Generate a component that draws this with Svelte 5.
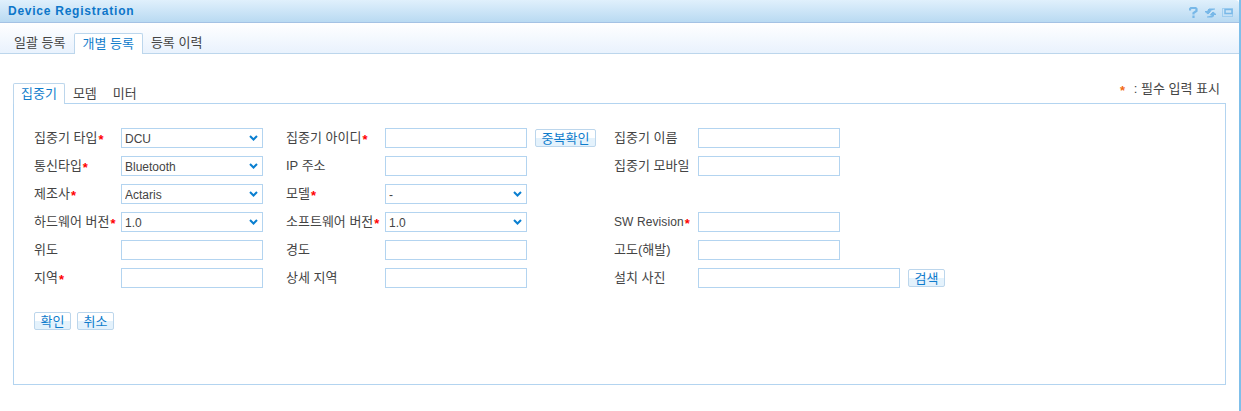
<script lang="ts">
  const topTabs = ['일괄 등록', '개별 등록', '등록 이력']
  const subTabs = ['집중기', '모뎀', '미터']
</script>

{#snippet sel(value: string)}
  <span class="select">
    <select><option>{value}</option></select>
    <svg class="chev" width="9" height="6" viewBox="0 0 9 6"><path d="M1 1l3.500 3.500L8 1" fill="none" stroke="#0a7fd0" stroke-width="2"/></svg>
  </span>
{/snippet}

{#snippet label(text: string, req = false)}
  <span class="label">{text}{#if req}<i class="req">*</i>{/if}</span>
{/snippet}

<div class="page">
  <header class="title">
    <h1>Device Registration</h1>
    <div class="icons">
      <svg class="help" width="9" height="11" viewBox="0 0 9 11"><path d="M1 3.500V2l1-1h4.500l1 1v2L4.500 6v1.500M4.500 8.500V11" fill="none" stroke="#78b8e8" stroke-width="2.200"/></svg>
      <svg width="11" height="10" viewBox="0 0 11 10"><path d="M10 1H4L3 2v2M0 3.500h5.500L3 6zM2 9h5.500L8.500 8V6.500M11 6.500H5.500L8 4z" fill="#78b8e8" stroke="#78b8e8"/></svg>
      <svg width="11" height="9" viewBox="0 0 11 9"><path d="M.5 .5h10v8H.5z" fill="none" stroke="#78b8e8" stroke-dasharray="1 1"/><path d="M3 1.500h7v4H3z" fill="none" stroke="#78b8e8" stroke-width="1.500"/></svg>
    </div>
  </header>

  <nav class="top-tabs">
    {#each topTabs as t, i}
      <span class="tab" class:active={i === 1}>{t}</span>
    {/each}
  </nav>

  <div class="body">
    <div class="sub-head">
      <nav class="sub-tabs">
        {#each subTabs as t, i}
          <span class="sub" class:active={i === 0}>{t}</span>
        {/each}
      </nav>
      <span class="legend"><i class="star">*</i> : 필수 입력 표시</span>
    </div>

    <section class="panel">
      <div class="form">
        {@render label('집중기 타입', true)}
        {@render sel('DCU')}
        {@render label('집중기 아이디', true)}
        <input />
        <div class="extra"><button>중복확인</button></div>
        {@render label('집중기 이름')}
        <input />

        {@render label('통신타입', true)}
        {@render sel('Bluetooth')}
        {@render label('IP 주소')}
        <input />
        <div class="extra"></div>
        {@render label('집중기 모바일')}
        <input />

        {@render label('제조사', true)}
        {@render sel('Actaris')}
        {@render label('모델', true)}
        {@render sel('-')}
        <div class="extra"></div>
        <span></span>
        <span></span>

        {@render label('하드웨어 버전', true)}
        {@render sel('1.0')}
        {@render label('소프트웨어 버전', true)}
        {@render sel('1.0')}
        <div class="extra"></div>
        <span class="label latin">SW Revision<i class="req">*</i></span>
        <input />

        {@render label('위도')}
        <input />
        {@render label('경도')}
        <input />
        <div class="extra"></div>
        {@render label('고도(해발)')}
        <input />

        {@render label('지역', true)}
        <input />
        {@render label('상세 지역')}
        <input />
        <div class="extra"></div>
        {@render label('설치 사진')}
        <div class="photo"><input class="wide" /><button>검색</button></div>
      </div>
      <div class="actions">
        <button>확인</button>
        <button>취소</button>
      </div>
    </section>
  </div>
</div>

<style>
  :global(body) {
    margin: 0;
    background: #fff;
  }

  .page {
    width: 1241px;
    height: 411px;
    box-sizing: border-box;
    border-right: 2px solid #7fbfea;
    font-family: "Liberation Sans", "Noto Sans CJK KR", sans-serif;
    font-size: 13px;
    color: #444;
    overflow: hidden;
  }

  .title {
    height: 23px;
    box-sizing: border-box;
    border-bottom: 1px solid #a4c2e4;
    background: linear-gradient(#e0f0fc, #b9daf2);
    display: flex;
    align-items: center;
    justify-content: space-between;
    padding: 0 6px 0 8px;
    border-top-right-radius: 4px;
  }

  h1 {
    margin: 0;
    font-size: 12px;
    letter-spacing: 0.75px;
    font-weight: bold;
    color: #0d76c9;
  }

  .icons {
    display: flex;
    align-items: center;
    gap: 6px;
    padding-top: 3px;
  }

  .help {
    margin-right: 1px;
  }

  .top-tabs {
    height: 31px;
    box-sizing: border-box;
    background: linear-gradient(#fff, #e9f2fd);
    border-bottom: 1px solid #bcd6ec;
    padding: 9px 0 0 6px;
    display: flex;
    align-items: flex-end;
  }

  .tab {
    height: 20px;
    line-height: 19px;
    padding: 0 8px;
    box-sizing: border-box;
  }

  .tab.active {
    height: 21px;
    margin: 0 0 -1px 1px;
    padding: 0 8px 0 7px;
    background: #fff;
    border: 1px solid #bcd6ec;
    border-bottom: 0;
    border-radius: 2px 2px 0 0;
    color: #0f7ccc;
  }

  .body {
    padding: 29px 13px 0;
  }

  .sub-head {
    height: 20px;
    display: flex;
    align-items: flex-end;
    justify-content: space-between;
    padding-right: 6px;
  }

  .sub-tabs {
    display: flex;
    align-items: flex-end;
    position: relative;
    top: 1px;
  }

  .sub {
    height: 20px;
    line-height: 19px;
    padding: 0 8px;
    box-sizing: border-box;
  }

  .sub.active {
    background: #fff;
    border: 1px solid #bcd6ec;
    border-bottom: 0;
    border-radius: 2px 2px 0 0;
    color: #0f7ccc;
    height: 21px;
    padding: 0 7px;
  }

  .legend {
    line-height: 20px;
    position: relative;
    top: -4px;
  }

  .star {
    color: #f26a12;
    font-style: normal;
    font-weight: bold;
    display: inline-block;
    margin-right: 5px;
    position: relative;
    top: 2px;
  }

  .panel {
    height: 282px;
    box-sizing: border-box;
    border: 1px solid #b3d4f0;
    padding: 24px 20px 0;
  }

  .form {
    display: grid;
    grid-template-columns: 87px 165px 99px 142px 87px 84px 300px;
    grid-auto-rows: 20px;
    row-gap: 8px;
  }

  .label {
    line-height: 20px;
    white-space: nowrap;
  }

  .label.latin {
    font-size: 12px;
    letter-spacing: 0.1px;
  }

  .req {
    color: #f00;
    font-size: 13px;
    font-style: normal;
    font-weight: bold;
    display: inline-block;
    margin-left: 1px;
    position: relative;
    top: 2px;
  }

  input {
    width: 142px;
    height: 20px;
    box-sizing: border-box;
    border: 1px solid #b3d4f0;
    background: #fff;
    padding: 0 3px;
    margin: 0;
    outline: 0;
  }

  .select {
    position: relative;
    display: block;
    width: 142px;
    height: 20px;
  }

  select {
    width: 142px;
    height: 20px;
    box-sizing: border-box;
    appearance: none;
    border: 1px solid #b3d4f0;
    background: #fff;
    padding: 1px 3px 0;
    margin: 0;
    font: inherit;
    font-size: 12px;
    color: #444;
    border-radius: 0;
  }

  .chev {
    position: absolute;
    right: 5px;
    top: 7px;
    pointer-events: none;
  }

  button {
    height: 18px;
    box-sizing: border-box;
    padding: 0 5.5px;
    border: 1px solid #bcd6ec;
    border-radius: 2px;
    background: linear-gradient(#fff 50%, #e4f2fc 50%);
    color: #0f7ccc;
    font: inherit;
    line-height: 15px;
    cursor: pointer;
  }

  .extra {
    padding: 1px 0 0 8px;
  }

  .photo {
    display: flex;
    align-items: flex-start;
    gap: 8px;
  }

  .photo button {
    margin-top: 1px;
  }

  input.wide {
    width: 202px;
  }

  .actions {
    display: flex;
    gap: 6px;
    margin-top: 24px;
  }
</style>
